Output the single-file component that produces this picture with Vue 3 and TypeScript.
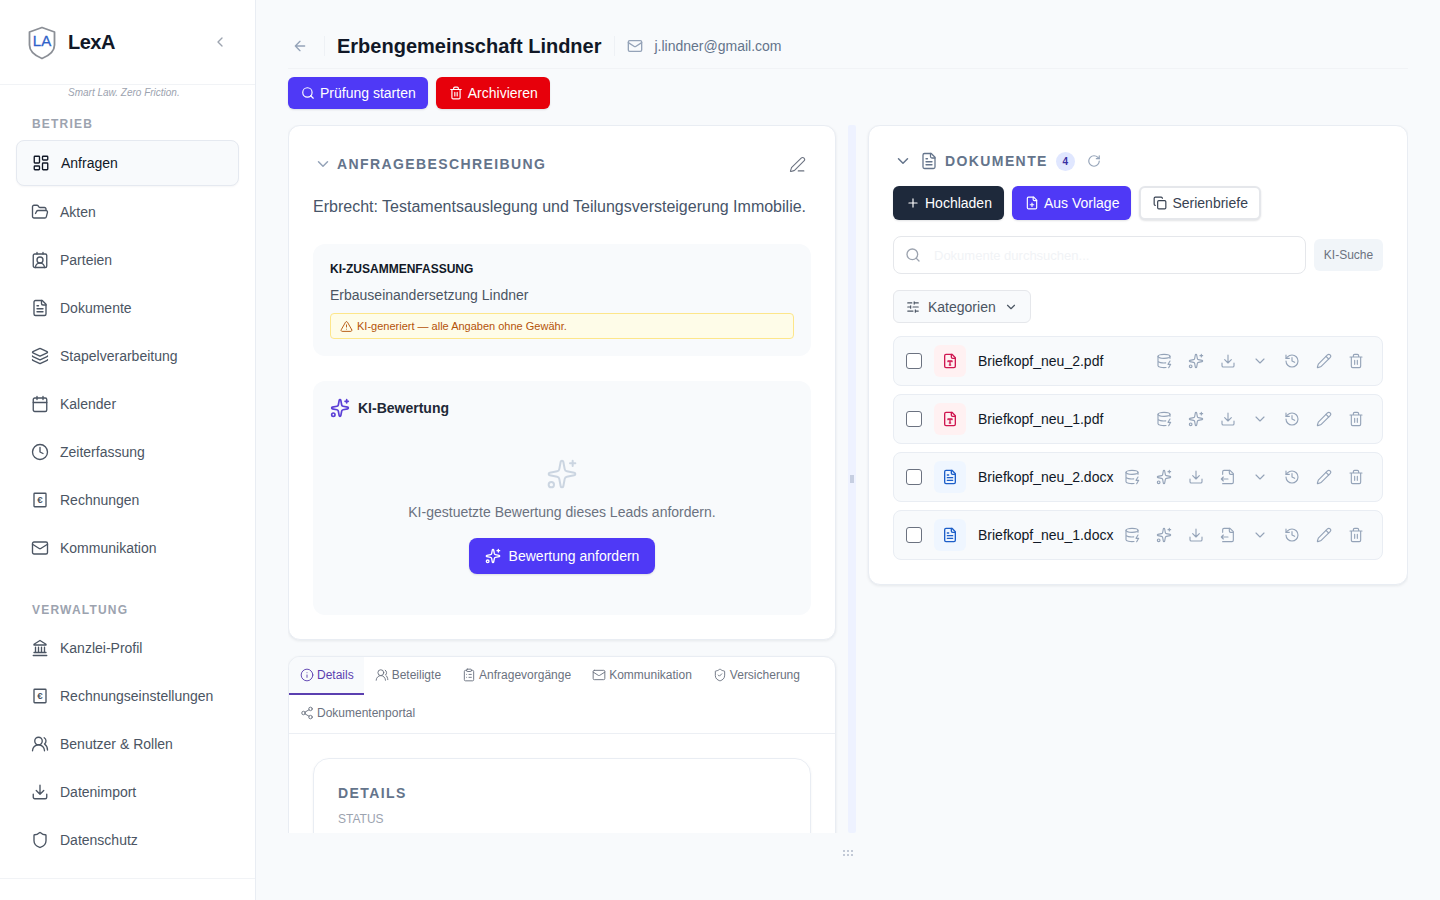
<script setup lang="ts">
const icons: Record<string, string> = {
  dashboard: '<rect x="3" y="3" width="7" height="9" rx="1"/><rect x="14" y="3" width="7" height="5" rx="1"/><rect x="14" y="12" width="7" height="9" rx="1"/><rect x="3" y="16" width="7" height="5" rx="1"/>',
  folder: '<path d="m6 14 1.5-2.9A2 2 0 0 1 9.24 10H20a2 2 0 0 1 1.94 2.5l-1.54 6a2 2 0 0 1-1.95 1.5H4a2 2 0 0 1-2-2V5a2 2 0 0 1 2-2h3.9a2 2 0 0 1 1.69.9l.81 1.2a2 2 0 0 0 1.67.9H18a2 2 0 0 1 2 2v2"/>',
  contact: '<path d="M16 2v2M17.915 22a6 6 0 0 0-12 0M8 2v2"/><circle cx="12" cy="12" r="4"/><rect x="3" y="4" width="18" height="18" rx="2"/>',
  file: '<path d="M15 2H6a2 2 0 0 0-2 2v16a2 2 0 0 0 2 2h12a2 2 0 0 0 2-2V7Z"/><path d="M14 2v4a2 2 0 0 0 2 2h4M10 9H8M16 13H8M16 17H8"/>',
  layers: '<path d="M12.83 2.18a2 2 0 0 0-1.66 0L2.6 6.08a1 1 0 0 0 0 1.83l8.58 3.91a2 2 0 0 0 1.66 0l8.58-3.9a1 1 0 0 0 0-1.83z"/><path d="M2 12a1 1 0 0 0 .58.91l8.6 3.91a2 2 0 0 0 1.65 0l8.58-3.9A1 1 0 0 0 22 12"/><path d="M2 17a1 1 0 0 0 .58.91l8.6 3.91a2 2 0 0 0 1.65 0l8.58-3.9A1 1 0 0 0 22 17"/>',
  calendar: '<path d="M8 2v4M16 2v4"/><rect x="3" y="4" width="18" height="18" rx="2"/><path d="M3 10h18"/>',
  clock: '<circle cx="12" cy="12" r="10"/><path d="M12 6v6l4 2"/>',
  euro: '<rect x="4" y="3" width="16" height="18" rx="1"/><text x="12" y="16.5" font-size="13" font-weight="700" text-anchor="middle" fill="currentColor" stroke="none">€</text>',
  mail: '<rect x="2" y="4" width="20" height="16" rx="2"/><path d="m22 7-8.97 5.7a1.94 1.94 0 0 1-2.06 0L2 7"/>',
  bank: '<path d="M3 22h18M6 18v-7M10 18v-7M14 18v-7M18 18v-7M4 18h16M12 2l8 5v1H4V7z"/>',
  users: '<path d="M18 21a8 8 0 0 0-16 0"/><circle cx="10" cy="8" r="5"/><path d="M22 20c0-3.37-2-6.5-4-8a5 5 0 0 0-.45-8.3"/>',
  download: '<path d="M21 15v4a2 2 0 0 1-2 2H5a2 2 0 0 1-2-2v-4M7 10l5 5 5-5M12 15V3"/>',
  shield: '<path d="M20 13c0 5-3.5 7.5-7.66 8.95a1 1 0 0 1-.67-.01C7.5 20.5 4 18 4 13V6a1 1 0 0 1 1-1c2 0 4.5-1.2 6.24-2.72a1.17 1.17 0 0 1 1.52 0C14.51 3.81 17 5 19 5a1 1 0 0 1 1 1z"/>',
  shieldCheck: '<path d="M20 13c0 5-3.5 7.5-7.66 8.95a1 1 0 0 1-.67-.01C7.5 20.5 4 18 4 13V6a1 1 0 0 1 1-1c2 0 4.5-1.2 6.24-2.72a1.17 1.17 0 0 1 1.52 0C14.51 3.81 17 5 19 5a1 1 0 0 1 1 1z"/><path d="m9 12 2 2 4-4"/>',
  arrowLeft: '<path d="m12 19-7-7 7-7M19 12H5"/>',
  search: '<path d="m21 21-4.34-4.34"/><circle cx="11" cy="11" r="8"/>',
  trash: '<path d="M3 6h18M19 6v14c0 1-1 2-2 2H7c-1 0-2-1-2-2V6M8 6V4c0-1 1-2 2-2h4c1 0 2 1 2 2v2M10 11v6M14 11v6"/>',
  chevronDown: '<path d="m6 9 6 6 6-6"/>',
  chevronLeft: '<path d="m15 18-6-6 6-6"/>',
  penLine: '<path d="M13 21h8"/><path d="M21.174 6.812a1 1 0 0 0-3.986-3.987L3.842 16.174a2 2 0 0 0-.5.83l-1.321 4.352a.5.5 0 0 0 .623.622l4.353-1.32a2 2 0 0 0 .83-.497z"/>',
  pencil: '<path d="M21.174 6.812a1 1 0 0 0-3.986-3.987L3.842 16.174a2 2 0 0 0-.5.83l-1.321 4.352a.5.5 0 0 0 .623.622l4.353-1.32a2 2 0 0 0 .83-.497z"/><path d="m15 5 4 4"/>',
  alert: '<path d="m21.73 18-8-14a2 2 0 0 0-3.48 0l-8 14A2 2 0 0 0 4 21h16a2 2 0 0 0 1.73-3M12 9v4M12 17h.01"/>',
  sparkles: '<path d="M11.017 2.814a1 1 0 0 1 1.966 0l1.051 5.558a2 2 0 0 0 1.594 1.594l5.558 1.051a1 1 0 0 1 0 1.966l-5.558 1.051a2 2 0 0 0-1.594 1.594l-1.051 5.558a1 1 0 0 1-1.966 0l-1.051-5.558a2 2 0 0 0-1.594-1.594l-5.558-1.051a1 1 0 0 1 0-1.966l5.558-1.051a2 2 0 0 0 1.594-1.594z"/><path d="M20 2v4M22 4h-4"/><circle cx="4" cy="20" r="2"/>',
  filePlus: '<path d="M15 2H6a2 2 0 0 0-2 2v16a2 2 0 0 0 2 2h12a2 2 0 0 0 2-2V7Z"/><path d="M14 2v4a2 2 0 0 0 2 2h4M9 15h6M12 18v-6"/>',
  copy: '<rect x="8" y="8" width="14" height="14" rx="2"/><path d="M4 16c-1.1 0-2-.9-2-2V4c0-1.1.9-2 2-2h10c1.1 0 2 .9 2 2"/>',
  plus: '<path d="M5 12h14M12 5v14"/>',
  refresh: '<path d="M21 12a9 9 0 1 1-9-9c2.52 0 4.93 1 6.74 2.74L21 8"/><path d="M21 3v5h-5"/>',
  sliders: '<path d="M10 5H3M12 19H3M14 3v4M16 17v4M21 12h-9M21 19h-5M21 5h-7M8 10v4M8 12H3"/>',
  fileType: '<path d="M15 2H6a2 2 0 0 0-2 2v16a2 2 0 0 0 2 2h12a2 2 0 0 0 2-2V7Z"/><path d="M14 2v4a2 2 0 0 0 2 2h4M9 13v-1h6v1M12 12v6M11 18h2"/>',
  database: '<ellipse cx="12" cy="5" rx="9" ry="3"/><path d="M3 5v14a9 3 0 0 0 12 2.84M21 5v3M21 12l-3 5h4l-3 5M3 12a9 3 0 0 0 11.59 2.87"/>',
  history: '<path d="M3 12a9 9 0 1 0 9-9 9.75 9.75 0 0 0-6.74 2.74L3 8"/><path d="M3 3v5h5M12 7v5l4 2"/>',
  fileIn: '<path d="M4 22h14a2 2 0 0 0 2-2V7l-5-5H6a2 2 0 0 0-2 2v4"/><path d="M14 2v4a2 2 0 0 0 2 2h4M2 15h10M5 12l-3 3 3 3"/>',
  info: '<circle cx="12" cy="12" r="10"/><path d="M12 16v-4M12 8h.01"/>',
  clipboard: '<rect x="8" y="2" width="8" height="4" rx="1"/><path d="M16 4h2a2 2 0 0 1 2 2v14a2 2 0 0 1-2 2H6a2 2 0 0 1-2-2V6a2 2 0 0 1 2-2h2M12 11h4M12 16h4M8 11h.01M8 16h.01"/>',
  share: '<circle cx="18" cy="5" r="3"/><circle cx="6" cy="12" r="3"/><circle cx="18" cy="19" r="3"/><path d="m8.59 13.51 6.83 3.98M15.41 6.51l-6.82 3.98"/>'
}

const betrieb = [
  { label: 'Anfragen', icon: 'dashboard', active: true },
  { label: 'Akten', icon: 'folder' },
  { label: 'Parteien', icon: 'contact' },
  { label: 'Dokumente', icon: 'file' },
  { label: 'Stapelverarbeitung', icon: 'layers' },
  { label: 'Kalender', icon: 'calendar' },
  { label: 'Zeiterfassung', icon: 'clock' },
  { label: 'Rechnungen', icon: 'euro' },
  { label: 'Kommunikation', icon: 'mail' }
]

const verwaltung = [
  { label: 'Kanzlei-Profil', icon: 'bank' },
  { label: 'Rechnungseinstellungen', icon: 'euro' },
  { label: 'Benutzer & Rollen', icon: 'users' },
  { label: 'Datenimport', icon: 'download' },
  { label: 'Datenschutz', icon: 'shield' }
]

const tabs = [
  { label: 'Details', icon: 'info', active: true },
  { label: 'Beteiligte', icon: 'users' },
  { label: 'Anfragevorgänge', icon: 'clipboard' },
  { label: 'Kommunikation', icon: 'mail' },
  { label: 'Versicherung', icon: 'shieldCheck' },
  { label: 'Dokumentenportal', icon: 'share' }
]

const pdfActions = ['database', 'sparkles', 'download', 'chevronDown', 'history', 'pencil', 'trash']
const docxActions = ['database', 'sparkles', 'download', 'fileIn', 'chevronDown', 'history', 'pencil', 'trash']

const documents = [
  { name: 'Briefkopf_neu_2.pdf', kind: 'pdf', actions: pdfActions },
  { name: 'Briefkopf_neu_1.pdf', kind: 'pdf', actions: pdfActions },
  { name: 'Briefkopf_neu_2.docx', kind: 'docx', actions: docxActions },
  { name: 'Briefkopf_neu_1.docx', kind: 'docx', actions: docxActions }
]
</script>

<template>
  <div class="app">
    <aside class="sidebar">
      <div class="brand">
        <svg class="logo" viewBox="0 0 28 34" fill="none">
          <path d="M14 1.5 26.5 6v13c0 6.5-5 10.5-12.5 13.5C6.5 29.5 1.5 25.5 1.5 19V6z" stroke="#8b8f96" stroke-width="1.8" stroke-linejoin="round" />
          <text x="14" y="19.5" text-anchor="middle" class="logo-text">LA</text>
        </svg>
        <span class="brand-name">LexA</span>
        <svg class="ic brand-toggle" viewBox="0 0 24 24" v-html="icons.chevronLeft" />
      </div>
      <nav class="nav">
        <p class="tagline">Smart Law. Zero Friction.</p>
        <h3 class="nav-title">BETRIEB</h3>
        <ul class="nav-list">
          <li v-for="item in betrieb" :key="item.label" class="nav-item" :class="{ active: item.active }">
            <svg class="ic" viewBox="0 0 24 24" v-html="icons[item.icon]" />
            {{ item.label }}
          </li>
        </ul>
        <h3 class="nav-title second">VERWALTUNG</h3>
        <ul class="nav-list">
          <li v-for="item in verwaltung" :key="item.label" class="nav-item">
            <svg class="ic" viewBox="0 0 24 24" v-html="icons[item.icon]" />
            {{ item.label }}
          </li>
        </ul>
      </nav>
      <div class="side-foot" />
    </aside>

    <main class="main">
      <header class="top">
        <svg class="ic back" viewBox="0 0 24 24" v-html="icons.arrowLeft" />
        <span class="top-sep first" />
        <h1>Erbengemeinschaft Lindner</h1>
        <span class="top-sep" />
        <svg class="ic top-mail" viewBox="0 0 24 24" v-html="icons.mail" />
        <span class="top-email">j.lindner@gmail.com</span>
      </header>

      <div class="actions">
        <button class="btn btn-indigo"><svg class="ic" viewBox="0 0 24 24" v-html="icons.search" />Prüfung starten</button>
        <button class="btn btn-red"><svg class="ic" viewBox="0 0 24 24" v-html="icons.trash" />Archivieren</button>
      </div>

      <div class="columns">
        <section class="col-left">
          <div class="card lead-card">
            <div class="lead-head">
              <svg class="ic lead-chevron" viewBox="0 0 24 24" v-html="icons.chevronDown" />
              <h2>ANFRAGEBESCHREIBUNG</h2>
              <svg class="ic lead-edit" viewBox="0 0 24 24" v-html="icons.penLine" />
            </div>
            <p class="lead-text">Erbrecht: Testamentsauslegung und Teilungsversteigerung Immobilie.</p>

            <div class="soft-box summary">
              <h4>KI-ZUSAMMENFASSUNG</h4>
              <p>Erbauseinandersetzung Lindner</p>
              <div class="warn">
                <svg class="ic" viewBox="0 0 24 24" v-html="icons.alert" />
                KI-generiert — alle Angaben ohne Gewähr.
              </div>
            </div>

            <div class="soft-box rating">
              <div class="rating-head">
                <svg class="ic" viewBox="0 0 24 24" v-html="icons.sparkles" />
                KI-Bewertung
              </div>
              <div class="rating-body">
                <svg class="ic rating-big" viewBox="0 0 24 24" v-html="icons.sparkles" />
                <p>KI-gestuetzte Bewertung dieses Leads anfordern.</p>
                <button class="btn btn-indigo btn-rating"><svg class="ic" viewBox="0 0 24 24" v-html="icons.sparkles" />Bewertung anfordern</button>
              </div>
            </div>
          </div>

          <div class="card tabs-card">
            <div class="tabs">
              <div v-for="tab in tabs" :key="tab.label" class="tab" :class="{ active: tab.active }">
                <svg class="ic" viewBox="0 0 24 24" v-html="icons[tab.icon]" />
                {{ tab.label }}
              </div>
            </div>
            <div class="tab-body">
              <div class="details">
                <h3>DETAILS</h3>
                <span>STATUS</span>
              </div>
            </div>
          </div>
        </section>

        <div class="splitter"><span class="split-grip" /></div>

        <section class="col-right">
          <div class="card docs-card">
            <div class="docs-head">
              <svg class="ic docs-chevron" viewBox="0 0 24 24" v-html="icons.chevronDown" />
              <svg class="ic docs-file" viewBox="0 0 24 24" v-html="icons.file" />
              <h2>DOKUMENTE</h2>
              <span class="count">4</span>
              <svg class="ic docs-refresh" viewBox="0 0 24 24" v-html="icons.refresh" />
            </div>

            <div class="docs-buttons">
              <button class="btn btn-dark"><svg class="ic" viewBox="0 0 24 24" v-html="icons.plus" />Hochladen</button>
              <button class="btn btn-indigo"><svg class="ic" viewBox="0 0 24 24" v-html="icons.filePlus" />Aus Vorlage</button>
              <button class="btn btn-white"><svg class="ic" viewBox="0 0 24 24" v-html="icons.copy" />Serienbriefe</button>
            </div>

            <div class="search-row">
              <div class="search">
                <svg class="ic" viewBox="0 0 24 24" v-html="icons.search" />
                <input type="text" placeholder="Dokumente durchsuchen..." />
              </div>
              <span class="ki-search">KI-Suche</span>
            </div>

            <button class="categories">
              <svg class="ic" viewBox="0 0 24 24" v-html="icons.sliders" />
              Kategorien
              <svg class="ic" viewBox="0 0 24 24" v-html="icons.chevronDown" />
            </button>

            <ul class="doc-list">
              <li v-for="doc in documents" :key="doc.name" class="doc-row">
                <span class="check" />
                <span class="doc-type" :class="doc.kind">
                  <svg class="ic" viewBox="0 0 24 24" v-html="doc.kind === 'pdf' ? icons.fileType : icons.file" />
                </span>
                <span class="doc-name">{{ doc.name }}</span>
                <span class="doc-actions">
                  <span v-for="(action, i) in doc.actions" :key="i" class="doc-action">
                    <svg class="ic" viewBox="0 0 24 24" v-html="icons[action]" />
                  </span>
                </span>
              </li>
            </ul>
          </div>
        </section>
      </div>

      <div class="bottom-grip"><span class="grip-dots" /></div>
    </main>
  </div>
</template>

<style>
html,
body {
  margin: 0;
  height: 100%;
  overflow: hidden;
}
</style>

<style scoped>
.app {
  display: flex;
  height: 900px;
  background: #f8fafc;
  color: #111827;
  font-family: "Liberation Sans", Arial, sans-serif;
  font-size: 14px;
}

.ic {
  flex: none;
  width: 16px;
  height: 16px;
  fill: none;
  stroke: currentColor;
  stroke-width: 2;
  stroke-linecap: round;
  stroke-linejoin: round;
}

h1, h2, h3, h4, p, ul {
  margin: 0;
  padding: 0;
}

ul {
  list-style: none;
}

/* Sidebar */
.sidebar {
  flex: none;
  display: flex;
  flex-direction: column;
  width: 255px;
  background: #fff;
  border-right: 1px solid #e9edf3;
}

.brand {
  display: flex;
  flex: none;
  align-items: center;
  height: 84px;
  padding: 0 28px;
  border-bottom: 1px solid #f1f3f6;
}

.logo {
  width: 28px;
  height: 34px;
  margin-top: 1px;
}

.logo-text {
  font-family: "Liberation Sans", Arial, sans-serif;
  font-size: 15px;
  fill: #2f62c9;
  stroke: #2f62c9;
  stroke-width: 0.3;
}

.brand-name {
  margin-left: 12px;
  font-size: 20px;
  font-weight: 700;
  letter-spacing: -0.5px;
  color: #111827;
}

.brand-toggle {
  margin-left: auto;
  margin-right: -1px;
  color: #9ca3af;
}

.nav {
  flex: 1;
  min-height: 0;
  overflow: hidden;
  padding: 0 16px;
}

.tagline {
  height: 14px;
  margin-bottom: 17px;
  padding-left: 52px;
  font-size: 10px;
  font-style: italic;
  line-height: 15px;
  color: #9ca3af;
}

.nav-title {
  height: 16px;
  margin: 0 0 8px 16px;
  font-size: 12px;
  font-weight: 700;
  letter-spacing: 1.2px;
  line-height: 16px;
  color: #9ca3af;
}

.nav-title.second {
  margin-top: 32px;
}

.nav-list {
  display: flex;
  flex-direction: column;
  gap: 4px;
}

.nav-item {
  display: flex;
  align-items: center;
  gap: 10px;
  height: 44px;
  padding-left: 15px;
  color: #4b5563;
}

.nav-item .ic {
  width: 18px;
  height: 18px;
  stroke-width: 1.8;
  margin-right: 1px;
}

.nav-item.active {
  background: #f8fafc;
  border: 1px solid #e5e9f0;
  border-radius: 8px;
  box-shadow: 0 1px 2px rgba(15, 23, 42, 0.04);
  color: #111827;
}

.side-foot {
  flex: none;
  height: 21px;
  border-top: 1px solid #f1f3f6;
}

/* Main */
.main {
  flex: 1;
  min-width: 0;
  padding: 0 32px;
}

.top {
  display: flex;
  align-items: center;
  height: 44px;
  padding-top: 24px;
  border-bottom: 1px solid #f1f3f6;
}

.back {
  margin-left: 4px;
  color: #94a3b8;
}

.top-sep {
  width: 1px;
  height: 20px;
  margin: 0 12px;
  background: #eef1f5;
}

.top-sep.first {
  margin-left: 16px;
}

h1 {
  font-size: 20px;
  font-weight: 700;
  line-height: 28px;
  color: #111827;
}

.top-mail {
  margin-right: 12px;
  color: #94a3b8;
}

.top-email {
  color: #64748b;
}

.actions {
  display: flex;
  gap: 8px;
  margin-top: 8px;
}

.btn {
  display: inline-flex;
  align-items: center;
  gap: 5px;
  box-sizing: border-box;
  height: 32px;
  padding: 0 11px 0 12px;
  border: 1px solid transparent;
  border-radius: 6px;
  font: inherit;
  color: #fff;
  box-shadow: 0 1px 2px rgba(15, 23, 42, 0.12);
}

.btn .ic {
  width: 14px;
  height: 14px;
}

.btn-indigo {
  background: #4f39f6;
}

.btn-red {
  background: #e7000b;
}

.btn-dark {
  background: #1e293b;
}

.btn-white {
  background: #fff;
  border: 2px solid #e5e7eb;
  color: #374151;
}

.columns {
  display: grid;
  grid-template-columns: 548px 8px 540px;
  gap: 12px;
  height: 708px;
  margin-top: 16px;
  overflow: hidden;
}

.card {
  box-sizing: border-box;
  background: #fff;
  border: 1px solid #e9edf3;
  border-radius: 12px;
  box-shadow: 0 1px 3px rgba(15, 23, 42, 0.08);
}

.col-left {
  display: flex;
  flex-direction: column;
  gap: 16px;
  min-height: 0;
}

.lead-card {
  flex: none;
  height: 515px;
  padding: 24px;
}

.lead-head {
  display: flex;
  align-items: center;
  height: 28px;
  padding-left: 1px;
  margin-bottom: 17px;
}

.lead-chevron {
  width: 18px;
  height: 18px;
  color: #94a3b8;
}

.lead-head h2 {
  margin-left: 5px;
  font-size: 14px;
  font-weight: 700;
  letter-spacing: 1.4px;
  color: #64748b;
}

.lead-edit {
  width: 17px;
  height: 17px;
  margin-left: auto;
  margin-right: 5px;
  stroke-width: 1.5;
  color: #6b7280;
}

.lead-text {
  font-size: 16px;
  line-height: 24px;
  color: #475569;
}

.soft-box {
  background: #f8fafc;
  border-radius: 12px;
}

.summary {
  height: 112px;
  box-sizing: border-box;
  margin-top: 25px;
  padding: 17px;
}

.summary h4 {
  font-size: 12px;
  font-weight: 700;
  line-height: 16px;
  color: #111827;
}

.summary p {
  margin-top: 8px;
  line-height: 20px;
  color: #4b5563;
}

.warn {
  display: flex;
  align-items: center;
  gap: 4px;
  box-sizing: border-box;
  height: 26px;
  margin-top: 8px;
  padding: 0 10px 0 9px;
  background: #fefce8;
  border: 1px solid #fde68a;
  border-radius: 4px;
  font-size: 11px;
  color: #b45309;
}

.warn .ic {
  width: 13px;
  height: 13px;
  stroke-width: 1.7;
}

.rating {
  height: 234px;
  box-sizing: border-box;
  margin-top: 25px;
  padding: 17px;
}

.rating-head {
  display: flex;
  align-items: center;
  gap: 8px;
  height: 20px;
  font-weight: 700;
  color: #1f2937;
}

.rating-head .ic {
  width: 20px;
  height: 20px;
  color: #5b3fd6;
}

.rating-body {
  display: flex;
  flex-direction: column;
  align-items: center;
  margin-top: 40px;
}

.rating-big {
  width: 32px;
  height: 32px;
  stroke-width: 1.5;
  color: #cbd5e1;
}

.rating-body p {
  margin-top: 12px;
  line-height: 20px;
  color: #6b7280;
}

.btn-rating {
  height: 36px;
  margin-top: 16px;
  padding: 0 15px;
  gap: 8px;
  border-radius: 8px;
}

.btn-rating .ic {
  width: 16px;
  height: 16px;
}

.tabs-card {
  flex: none;
  height: 300px;
  overflow: hidden;
}

.tabs {
  display: flex;
  flex-wrap: wrap;
  border-bottom: 1px solid #eceff4;
}

.tab {
  display: flex;
  align-items: center;
  gap: 3px;
  box-sizing: border-box;
  height: 38px;
  padding: 0 10px 0 11px;
  border-bottom: 2px solid transparent;
  font-size: 12px;
  color: #6b7280;
}

.tab .ic {
  width: 14px;
  height: 14px;
  stroke-width: 1.6;
}

.tab.active {
  background: #f8fafc;
  border-bottom-color: #5b3fb0;
  color: #5b3fb0;
}

.tab-body {
  padding: 24px;
}

.details {
  box-sizing: border-box;
  height: 200px;
  padding: 24px;
  border: 1px solid #e9edf3;
  border-radius: 16px;
  box-shadow: 0 1px 3px rgba(15, 23, 42, 0.05);
}

.details h3 {
  font-size: 14px;
  font-weight: 700;
  letter-spacing: 1.4px;
  line-height: 20px;
  color: #64748b;
}

.details span {
  display: block;
  margin-top: 8px;
  font-size: 12px;
  line-height: 16px;
  color: #9ca3af;
}

.splitter {
  display: flex;
  align-items: center;
  justify-content: center;
  background: #eef2ff;
  border-radius: 2px;
}

.split-grip {
  width: 4px;
  height: 8px;
  background-image: radial-gradient(circle, #c5cde0 0.7px, transparent 0.9px);
  background-size: 2px 2px;
}

.docs-card {
  height: 460px;
  padding: 24px;
}

.docs-head {
  display: flex;
  align-items: center;
  height: 22px;
  margin-left: 1px;
}

.docs-chevron {
  width: 18px;
  height: 18px;
  color: #64748b;
}

.docs-file {
  width: 18px;
  height: 18px;
  margin-left: 8px;
  stroke-width: 1.7;
  color: #64748b;
}

.docs-head h2 {
  margin-left: 7px;
  font-size: 14px;
  font-weight: 700;
  letter-spacing: 1.4px;
  color: #64748b;
}

.count {
  display: flex;
  align-items: center;
  justify-content: center;
  width: 19px;
  height: 19px;
  margin-left: 8px;
  background: #e0e7ff;
  border-radius: 50%;
  font-size: 10px;
  font-weight: 700;
  color: #3730a3;
}

.docs-refresh {
  width: 14px;
  height: 14px;
  margin-left: 12px;
  color: #94a3b8;
}

.docs-buttons {
  display: flex;
  gap: 8px;
  margin-top: 14px;
}

.docs-buttons .btn {
  height: 34px;
}

.search-row {
  display: flex;
  align-items: center;
  gap: 8px;
  margin-top: 16px;
}

.search {
  flex: 1;
  display: flex;
  align-items: center;
  gap: 11px;
  box-sizing: border-box;
  height: 38px;
  padding: 0 11px;
  border: 1px solid #e5e7eb;
  border-radius: 8px;
  color: #9ca3af;
}

.search input {
  flex: 1;
  min-width: 0;
  border: 0;
  outline: 0;
  background: transparent;
  font: inherit;
  font-size: 13px;
}

.search input::placeholder {
  color: #f1f3f6;
}

.ki-search {
  display: flex;
  align-items: center;
  justify-content: center;
  width: 69px;
  height: 32px;
  background: #f1f5f9;
  border-radius: 6px;
  font-size: 12px;
  color: #6b7280;
}

.categories {
  display: flex;
  align-items: center;
  gap: 8px;
  box-sizing: border-box;
  width: 138px;
  height: 33px;
  margin-top: 16px;
  padding: 0 12px;
  background: #f8fafc;
  border: 1px solid #e5e7eb;
  border-radius: 6px;
  font: inherit;
  color: #4b5563;
}

.categories .ic {
  width: 14px;
  height: 14px;
}

.doc-list {
  display: flex;
  flex-direction: column;
  gap: 8px;
  margin-top: 13px;
}

.doc-row {
  display: flex;
  align-items: center;
  box-sizing: border-box;
  height: 50px;
  padding: 0 10px 0 12px;
  background: #f8fafc;
  border: 1px solid #e9edf3;
  border-radius: 8px;
}

.check {
  flex: none;
  box-sizing: border-box;
  width: 16px;
  height: 16px;
  background: #fff;
  border: 1px solid #6b7280;
  border-radius: 3px;
}

.doc-type {
  flex: none;
  display: flex;
  align-items: center;
  justify-content: center;
  width: 32px;
  height: 32px;
  margin: 0 12px;
  border-radius: 6px;
}

.doc-type.pdf {
  background: #fff1f2;
  color: #cf1650;
}

.doc-type.docx {
  background: #eff6ff;
  color: #1d5fc9;
}

.doc-name {
  white-space: nowrap;
  color: #111827;
}

.doc-actions {
  display: flex;
  margin-left: auto;
}

.doc-action {
  display: flex;
  align-items: center;
  justify-content: center;
  width: 32px;
  height: 32px;
  color: #94a3b8;
}

.doc-action .ic {
  stroke-width: 1.7;
}

.bottom-grip {
  display: flex;
  justify-content: center;
  padding-top: 16px;
}

.grip-dots {
  width: 12px;
  height: 8px;
  background-image: radial-gradient(circle, #c2c9d6 0.9px, transparent 1.1px);
  background-size: 4px 4px;
}
</style>
